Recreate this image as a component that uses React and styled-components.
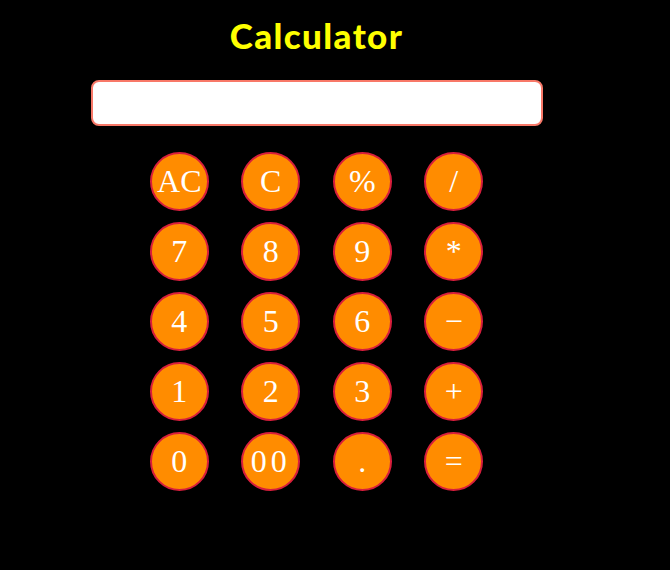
import React from 'react';
import styled, { createGlobalStyle } from 'styled-components';

const GlobalStyle = createGlobalStyle`
    body {
        margin: 8px;
        background: #000;
    }
`

const Wrapper = styled.div`
    width: 617px;
    display: flex;
    flex-direction: column;
    align-items: center;
`

const Title = styled.h1`
    margin: 10px 0 0;
    height: 62px;
    color: #ffff00;
    font-family: "Lato", sans-serif;
    font-weight: 900;
    font-size: 35px;
    line-height: 34px;
    letter-spacing: 1.4px;
`

const Display = styled.input`
    box-sizing: border-box;
    width: 452px;
    height: 46px;
    border: 2px solid #f87868;
    border-radius: 8px;
    background: #fff;
    outline: none;
`

const Keypad = styled.div`
    margin-top: 26px;
    display: grid;
    grid-template-columns: repeat(4, 59px);
    column-gap: 32.5px;
    row-gap: 11px;
`

const Key = styled.button`
    box-sizing: border-box;
    width: 59px;
    height: 59px;
    padding: 0;
    border: 2px solid #d81e3c;
    border-radius: 50%;
    background: #ff8c00;
    color: #fff;
    font-family: "Liberation Serif", serif;
    font-size: 32px;
    letter-spacing: ${props => props.$wide ? '4px' : '0'};
    cursor: pointer;
`

const keys = ['AC', 'C', '%', '/', '7', '8', '9', '*', '4', '5', '6', '\u2212', '1', '2', '3', '+', '0', '00', '.', '='];

const App = () => {
    return (
        <Wrapper>
            <GlobalStyle />
            <Title>Calculator</Title>
            <Display type="text" />
            <Keypad>
                {keys.map(k => <Key key={k} $wide={k === '00'}>{k}</Key>)}
            </Keypad>
        </Wrapper>
    )
}

export default App
